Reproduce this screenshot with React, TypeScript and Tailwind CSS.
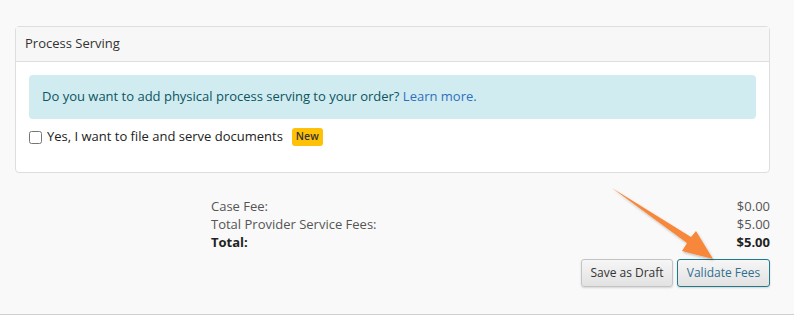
import React from "react";

export default function App() {
  return (
    <div className="relative h-[316px] w-[794px] overflow-hidden bg-[#f9f9f9] font-['Open_Sans',sans-serif]">
      <div className="pl-[15px] pr-[24px] pt-[26px]">
        <div className="rounded-[4px] border border-[#dedede] bg-white">
          <div className="flex h-[35px] items-center border-b border-[#dedede] bg-[#f7f7f7] px-[9px] text-[13px] text-[#333]">
            Process Serving
          </div>
          <div className="px-[13px] pb-[26px] pt-[13px]">
            <div className="flex h-[44px] items-center rounded-[4px] bg-[#d1ecf1] px-[13px] text-[13px] text-[#0c5460]">
              Do you want to add physical process serving to your order?&nbsp;
              <a href="#" className="text-[#2f6fc0]">Learn more.</a>
            </div>
            <label className="mt-[9px] flex h-[18px] items-center text-[13px] text-[#222]">
              <input type="checkbox" className="m-0 mr-[5px] h-[13px] w-[13px]" />
              Yes, I want to file and serve documents
              <span className="ml-[9px] flex h-[18px] items-center rounded-[3px] bg-[#ffc107] px-[4px] text-[10.5px] font-semibold text-[#333]">
                New
              </span>
            </label>
          </div>
        </div>

        <div className="ml-[196px] mt-[24px] text-[13px] leading-[18px]">
          <div className="flex justify-between text-[#555]">
            <span>Case Fee:</span>
            <span>$0.00</span>
          </div>
          <div className="flex justify-between text-[#555]">
            <span>Total Provider Service Fees:</span>
            <span>$5.00</span>
          </div>
          <div className="flex justify-between font-bold text-[#222]">
            <span>Total:</span>
            <span>$5.00</span>
          </div>
        </div>

        <div className="mt-[8px] flex justify-end gap-[4px]">
          <button
            type="button"
            className="h-[28px] w-[92px] rounded-[3px] border border-[#c4c4c4] bg-gradient-to-b from-[#f6f6f6] to-[#e2e2e2] text-[12px] text-[#333] shadow-[0_1px_2px_rgba(0,0,0,0.15)]"
          >
            Save as Draft
          </button>
          <button
            type="button"
            className="h-[28px] w-[93px] rounded-[3px] border border-[#1f7a8c] bg-gradient-to-b from-[#f6f6f6] to-[#e2e2e2] text-[12px] text-[#2f6f8f] shadow-[0_1px_2px_rgba(0,0,0,0.15)]"
          >
            Validate Fees
          </button>
        </div>
      </div>

      <div className="absolute bottom-0 left-0 h-[2px] w-full border-t border-[#cfcfcf] bg-white" />

      <svg className="pointer-events-none absolute left-0 top-0" width="794" height="316">
        <defs>
          <filter id="sh" x="-20%" y="-20%" width="140%" height="140%">
            <feDropShadow dx="1" dy="1.5" stdDeviation="1.2" floodColor="#000" floodOpacity="0.25" />
          </filter>
        </defs>
        <polygon
          points="612,188 691,237 696,231 713,259 682,251 687,243"
          fill="#f7883a"
          filter="url(#sh)"
        />
      </svg>
    </div>
  );
}
